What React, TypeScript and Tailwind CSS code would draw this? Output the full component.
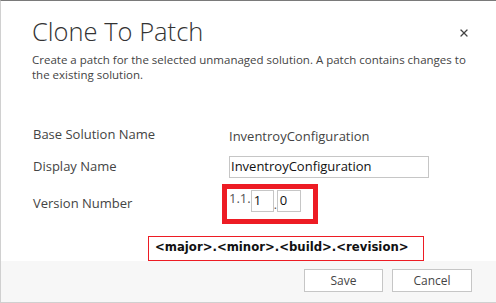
import { X } from 'lucide-react'

const font = { fontFamily: '"Open Sans", "Noto Sans", sans-serif' }

function Row({ label, children }: { label: string; children: React.ReactNode }) {
  return (
    <div className="flex items-center">
      <div className="w-[196px] shrink-0 text-[13px] text-[#444]">{label}</div>
      <div className="flex-1">{children}</div>
    </div>
  )
}

export default function App() {
  return (
    <div
      className="flex h-[303px] w-[496px] flex-col overflow-hidden border-t border-b border-l border-t-[#7a7a7a] border-b-[#d0d0d0] border-l-[#d0d0d0] bg-white"
      style={font}
    >
      <div className="relative flex-1 bg-white">
        <div className="flex items-start justify-between pt-[12px] pr-[26px] pl-[31px]">
          <h1 className="text-[25.5px] leading-[36px] font-light text-[#333]">Clone To Patch</h1>
          <button type="button" className="mt-[14px] text-[#444]" aria-label="Close">
            <X size={12} strokeWidth={2.5} />
          </button>
        </div>
        <p className="mt-[3px] w-[480px] pl-[31px] text-[11.5px] leading-[15px] text-[#444]">
          Create a patch for the selected unmanaged solution. A patch contains changes to the
          existing solution.
        </p>

        <div className="mt-[41px] flex flex-col pl-[32px]">
          <Row label="Base Solution Name">
            <span className="text-[13px] text-[#444]">InventroyConfiguration</span>
          </Row>
          <div className="mt-[9px]">
            <Row label="Display Name">
              <div className="flex h-[22px] w-[200px] items-center border border-[#c6c6c6] px-[1px] text-[13px] text-[#111]">
                InventroyConfiguration
              </div>
            </Row>
          </div>
          <div className="mt-[6px]">
            <Row label="Version Number">
              <div className="-ml-[7px] flex h-[40px] w-[96px] items-start border-[5px] border-[#ed1c24] pt-[1px] pl-[2px]">
                <span className="text-[13px] leading-[16px] text-[#555]">1.1.</span>
                <div className="flex h-[22px] w-[23px] items-center border border-[#c6c6c6] pl-[2px] text-[13px] text-[#111]">
                  1
                </div>
                <span className="self-center text-[12px] text-[#555]">.</span>
                <div className="flex h-[22px] w-[24px] items-center border border-[#c6c6c6] pl-[2px] text-[13px] text-[#111]">
                  0
                </div>
              </div>
            </Row>
          </div>
        </div>

        <div className="relative z-10 mt-[12px] ml-[147px] flex h-[25px] w-[276px] items-start border border-[#ed1c24] bg-white pl-[6px]">
          <span
            className="text-[11.7px] leading-[20px] font-bold text-[#111]"
            style={{ fontFamily: '"DejaVu Sans", Verdana, sans-serif' }}
          >
            &lt;major&gt;.&lt;minor&gt;.&lt;build&gt;.&lt;revision&gt;
          </span>
        </div>
      </div>

      <div className="-mt-[2px] flex h-[44px] shrink-0 items-start justify-end gap-[9px] bg-[#f7f7f7] pt-[10px] pr-[24px]">
        <button
          type="button"
          className="h-[23px] w-[79px] border border-[#c6c6c6] bg-white text-[12px] text-[#444]"
        >
          Save
        </button>
        <button
          type="button"
          className="h-[23px] w-[80px] border border-[#c6c6c6] bg-white text-[12px] text-[#444]"
        >
          Cancel
        </button>
      </div>
    </div>
  )
}
